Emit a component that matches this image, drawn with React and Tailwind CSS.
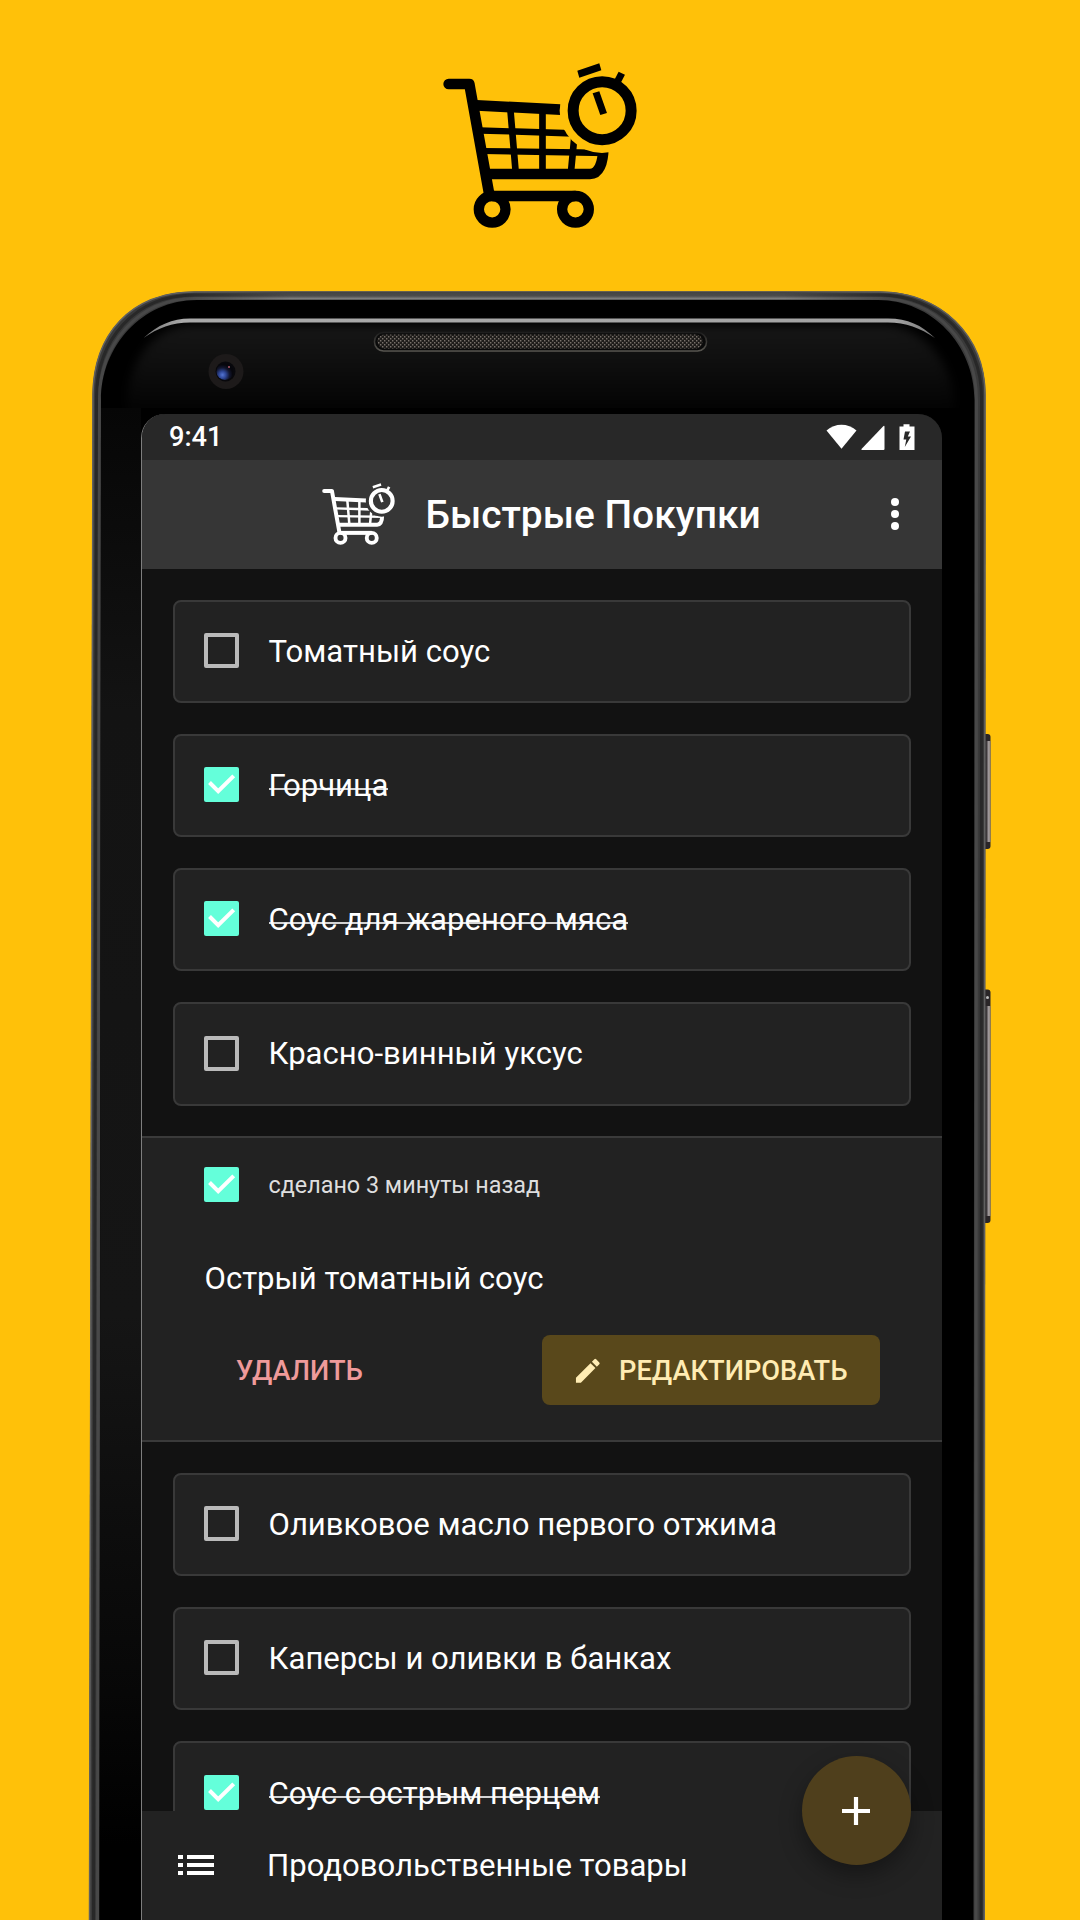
import React from "react";

const before = [
  { text: "Томатный соус", done: false },
  { text: "Горчица", done: true },
  { text: "Соус для жареного мяса", done: true },
  { text: "Красно-винный уксус", done: false },
];

const after = [
  { text: "Оливковое масло первого отжима", done: false },
  { text: "Каперсы и оливки в банках", done: false },
  { text: "Соус с острым перцем", done: true },
];

/* Shopping cart with a stopwatch at its corner */
function CartLogo({ className, id }) {
  return (
    <svg className={className} viewBox="39 38 583 496" fill="none" stroke="currentColor">
      <mask id={id} maskUnits="userSpaceOnUse" x="0" y="0" width="660" height="570">
        <rect width="660" height="570" fill="#fff" stroke="none" />
        <circle cx="516" cy="181" r="127" fill="#000" stroke="none" />
      </mask>
      <path d="M56 101H118L121 118L177 428" strokeWidth="32" strokeLinecap="round" strokeLinejoin="round" />
      <g mask={`url(#${id})`}>
        <path d="M140 149L392 162V194L140 181Z" fill="currentColor" stroke="none" />
        <path d="M150 231L402 238L430 259L150 250Z" fill="currentColor" stroke="none" />
        <path d="M160 293L450 297L530 300V318L160 311Z" fill="currentColor" stroke="none" />
        <path d="M241 175L257 365M337.500 180V365M434 250L423 365" strokeWidth="20" />
        <path d="M172 371H480C506 371 520 340 520 290" strokeWidth="32" />
      </g>
      <path d="M186 437H437" strokeWidth="32" />
      <circle cx="186.500" cy="477" r="40" strokeWidth="31" />
      <circle cx="436.500" cy="477" r="40" strokeWidth="31" />
      <circle cx="516.500" cy="181" r="87" strokeWidth="33" />
      <path d="M442 61L508 39L514 60L448 82Z" fill="currentColor" stroke="none" />
      <path d="M566 64L585 73L571 100L552 91Z" fill="currentColor" stroke="none" />
      <path d="M488 129L508 123L531 188L511 194Z" fill="currentColor" stroke="none" />
    </svg>
  );
}

/* Body of the handset: frame, glass, earpiece, camera and side keys */
function PhoneArt() {
  return (
    <svg className="absolute inset-0 h-full w-full" viewBox="0 291 1080 1629" fill="none">
      <defs>
        <linearGradient id="top" gradientUnits="userSpaceOnUse" x1="0" x2="0" y1="291" y2="301">
          <stop offset="0" stopColor="#6a6658" />
          <stop offset="0.15" stopColor="#444" />
          <stop offset="0.5" stopColor="#4c4c4c" />
          <stop offset="0.75" stopColor="#7c7c7c" />
          <stop offset="1" stopColor="#333" />
        </linearGradient>
        <linearGradient id="fadeEnds" gradientUnits="userSpaceOnUse" x1="185" x2="890" y1="0" y2="0">
          <stop offset="0" stopColor="#000" />
          <stop offset="0.15" stopColor="#fff" />
          <stop offset="0.85" stopColor="#fff" />
          <stop offset="1" stopColor="#000" />
        </linearGradient>
        <mask id="topMask" maskUnits="userSpaceOnUse" x="180" y="285" width="715" height="20">
          <rect x="180" y="285" width="715" height="20" fill="url(#fadeEnds)" />
        </mask>
        <linearGradient id="panel" gradientUnits="userSpaceOnUse" x1="0" x2="0" y1="320" y2="410">
          <stop offset="0" stopColor="#171717" />
          <stop offset="0.5" stopColor="#0e0e0e" />
          <stop offset="1" stopColor="#030303" />
        </linearGradient>
        <linearGradient id="leftGlass" gradientUnits="userSpaceOnUse" x1="0" x2="0" y1="408" y2="1920">
          <stop offset="0" stopColor="#060606" />
          <stop offset="0.2" stopColor="#131313" />
          <stop offset="0.6" stopColor="#151515" />
          <stop offset="0.85" stopColor="#070707" />
          <stop offset="0.95" stopColor="#000" />
        </linearGradient>
        <linearGradient id="shine" gradientUnits="userSpaceOnUse" x1="143" x2="935" y1="0" y2="0">
          <stop offset="0" stopColor="#777" />
          <stop offset="0.05" stopColor="#aaa" />
          <stop offset="0.95" stopColor="#a4a4a4" />
          <stop offset="1" stopColor="#777" />
        </linearGradient>
        <linearGradient id="key" gradientUnits="userSpaceOnUse" x1="984" x2="991" y1="0" y2="0">
          <stop offset="0" stopColor="#222" />
          <stop offset="0.35" stopColor="#3a3638" />
          <stop offset="0.65" stopColor="#a09a9c" />
          <stop offset="1" stopColor="#8b8072" />
        </linearGradient>
        <linearGradient id="slot" gradientUnits="userSpaceOnUse" x1="0" x2="0" y1="332" y2="352">
          <stop offset="0" stopColor="#1d1d1d" />
          <stop offset="1" stopColor="#5a5852" />
        </linearGradient>
        <radialGradient id="lens" cx="0.35" cy="0.7" r="0.6">
          <stop offset="0" stopColor="#5475d2" />
          <stop offset="0.35" stopColor="#2d4594" />
          <stop offset="0.7" stopColor="#12162f" />
          <stop offset="1" stopColor="#06060c" />
        </radialGradient>
        <pattern id="mesh" width="4" height="4" patternUnits="userSpaceOnUse">
          <rect width="4" height="4" fill="#1e1c1a" />
          <rect width="1.400" height="1.500" fill="#77706a" />
          <rect x="2" y="2" width="1.400" height="1.500" fill="#77706a" />
        </pattern>
        <filter id="soft" x="-20%" y="-20%" width="140%" height="140%" colorInterpolationFilters="sRGB">
          <feGaussianBlur stdDeviation="5" />
        </filter>
        <clipPath id="upper">
          <rect x="80" y="285" width="920" height="123" />
        </clipPath>
      </defs>

      {/* side keys */}
      <rect x="980" y="734" width="10.500" height="115" rx="3" fill="#2a2628" />
      <rect x="984" y="741" width="6.500" height="101" fill="url(#key)" />
      <rect x="980" y="989.500" width="10.500" height="233.500" rx="3" fill="#2a2628" />
      <rect x="984" y="1006" width="6.500" height="210" fill="url(#key)" />
      <circle cx="987.500" cy="997.500" r="1.500" fill="#bbb" />

      {/* metal frame */}
      <path d="M89 1920L92.500 395C93 335 130 291.500 195 291.500H880C940 291.500 985.500 335 985.500 395L984.700 1920Z" fill="#3a3a3a" />
      <path d="M89.500 1920L93 395C93.500 335 130 292 195 292H880C940 292 985 335 985 395L984.200 1920" stroke="#606060" strokeWidth="1.500" />
      <path d="M93.500 1920L96.500 397C97 340 134 295 195 295H880C938 295 981.500 339 981.500 397L981 1920" stroke="#282828" strokeWidth="3" />
      <path d="M97.500 1920L99.500 400C99.500 344 138 298.500 195 298.500H880C935 298.500 976.500 342 976.500 400L976 1920" stroke="#484848" strokeWidth="3" />
      <path d="M180 291.500H895V301H180Z" fill="url(#top)" mask="url(#topMask)" />

      {/* front glass */}
      <path d="M99.500 1920L101 400C101 346 142 300 197 300H878C932 300 974.500 345 974.500 400L973.500 1920Z" fill="#000" />
      <g clipPath="url(#upper)">
        <path d="M127 440V400C129 362 152 326 192 325H884C923 326 952 362 954 400V440Z" fill="url(#panel)" filter="url(#soft)" />
      </g>
      <path d="M101 408H141V1920H99.500Z" fill="url(#leftGlass)" />
      <path d="M143.500 338C158 325 172 318.500 190 318.500H888C908 318.500 921 325 935 338C920 328 906 322.500 888 322.500H190C172 322.500 158 328 143.500 338Z" fill="url(#shine)" />

      {/* earpiece */}
      <rect x="374.500" y="332.500" width="332" height="18.500" rx="9" fill="#0a0a0a" stroke="url(#slot)" strokeWidth="1.500" />
      <rect x="377.500" y="334.500" width="325" height="14" rx="7" fill="url(#mesh)" />

      {/* camera */}
      <circle cx="226" cy="371.500" r="17.500" fill="#1d1a1a" />
      <circle cx="225.500" cy="371.500" r="10" fill="#08080c" />
      <circle cx="225" cy="371.500" r="8.500" fill="url(#lens)" />
      <circle cx="229" cy="367" r="1" fill="#b05a6a" />
    </svg>
  );
}

function Checkbox({ done }) {
  if (!done) {
    return <span className="size-[35px] shrink-0 rounded-[2px] border-4 border-[#bababa]" />;
  }
  return (
    <span className="flex size-[35px] shrink-0 rounded-[2px] bg-[#64ffda]">
      <svg className="size-full" viewBox="0 0 35 35" fill="none" stroke="#fff" strokeWidth="4">
        <path d="M5.500 15.500L14.200 24.200L29.700 8.800" />
      </svg>
    </span>
  );
}

function Item({ text, done }) {
  return (
    <li className="flex h-[103.300px] items-center rounded-[8px] border-2 border-[#393939] bg-[#222222] pl-[29px]">
      <span className="mb-[2px] flex">
        <Checkbox done={done} />
      </span>
      {done ? (
        <s className="relative ml-[29.500px] text-[31.100px] leading-none no-underline after:absolute after:inset-x-0 after:top-[18px] after:h-[2px] after:bg-white/80">
          {text}
        </s>
      ) : (
        <span className="ml-[29.500px] text-[31.100px] leading-none">{text}</span>
      )}
    </li>
  );
}

function StatusBar() {
  return (
    <div className="flex h-[45.500px] items-center bg-[#282828] pr-[27.500px] pl-[27px] text-[27.200px] font-medium">
      <span className="pt-[2px] leading-none">9:41</span>
      <svg className="ml-auto h-[26px] w-[89px]" viewBox="0 0 89 26" fill="#fff">
        <path d="M0.500 6.500C9 -1.200 22 -1.200 30.500 6.500L15.500 24.800Z" />
        <path d="M35.500 26V25L57 2.500Q58.500 1 58.500 3V25Q58.500 26 57.500 26Z" />
        <path fillRule="evenodd" d="M73.500 2.500H77.500V0.300H83.500V2.500H88.500V26H73.500ZM79 7.500L77.500 15.500H80.300L78.800 23L85 12.500H81.800L84 7.500Z" />
      </svg>
    </div>
  );
}

function AppBar() {
  return (
    <header className="flex h-[109px] items-center bg-[#363636] pl-[180px]">
      <CartLogo id="halo-small" className="h-[62px] w-[73px]" />
      <h1 className="ml-[30.500px] pt-[2px] text-[38.900px] leading-none font-medium">Быстрые Покупки</h1>
      <div className="mr-[43px] ml-auto flex flex-col gap-[4px]">
        <span className="size-[8px] rounded-full bg-white" />
        <span className="size-[8px] rounded-full bg-white" />
        <span className="size-[8px] rounded-full bg-white" />
      </div>
    </header>
  );
}

function ExpandedItem() {
  return (
    <section className="mt-[30.700px] h-[305.500px] border-y-2 border-[#3a3a3a] bg-[#222222] pt-[29px]">
      <div className="flex items-center pl-[62px]">
        <Checkbox done />
        <span className="ml-[29.500px] pt-[2px] text-[23.350px] leading-none text-[#dedede]">сделано 3 минуты назад</span>
      </div>
      <p className="mt-[59px] pl-[62.500px] text-[31.100px] leading-[36px]">Острый томатный соус</p>
      <div className="mt-[38px] flex items-center justify-between pr-[62px] pl-[94px]">
        <span className="pt-[2px] text-[27.200px] leading-none font-medium text-[#ef9a9a]">УДАЛИТЬ</span>
        <button className="flex h-[70px] w-[338.500px] items-center rounded-[8px] bg-[#59481b] pl-[30px] text-[27.240px] font-medium text-[#ffecb3]">
          <svg className="size-[31.600px]" viewBox="0 0 24 24" fill="currentColor">
            <path d="M3 17.250V21h3.750L17.810 9.940l-3.750-3.750L3 17.250zM20.710 7.040c.390-.390.390-1.020 0-1.410l-2.340-2.340a.996.996 0 0 0-1.410 0l-1.830 1.830 3.750 3.750 1.830-1.830z" />
          </svg>
          <span className="ml-[16px] pt-[2px] leading-none">РЕДАКТИРОВАТЬ</span>
        </button>
      </div>
    </section>
  );
}

function BottomBar() {
  return (
    <footer className="relative flex h-[108.500px] items-center bg-[#222222] pl-[36px]">
      <svg className="h-[20px] w-[36px]" viewBox="0 0 36 20" fill="#fff">
        <path d="M0 0H5V4H0ZM9 0H36V4H9ZM0 8H5V12H0ZM9 8H36V12H9ZM0 16H5V20H0ZM9 16H36V20H9Z" />
      </svg>
      <span className="ml-[53px] text-[31.100px] leading-none">Продовольственные товары</span>
      <button className="absolute -top-[55px] right-[31px] flex size-[109px] items-center justify-center rounded-full bg-[#4f3f1c] shadow-[0_10px_22px_rgba(0,0,0,0.35)]">
        <svg className="mr-px size-[28px]" viewBox="0 0 28 28" stroke="#fff" strokeWidth="4.200">
          <path d="M14 0V28M0 14H28" />
        </svg>
      </button>
    </footer>
  );
}

export default function App() {
  return (
    <div className="flex h-[1920px] w-[1080px] flex-col overflow-hidden bg-[#ffc109] font-[Roboto,sans-serif]">
      <div className="flex h-[291px] shrink-0 justify-center pt-[62.700px] text-black">
        <CartLogo id="halo-large" className="h-[165.300px] w-[194.300px]" />
      </div>
      <div className="relative h-[1629px] shrink-0 pt-[123px] pl-[141px]">
        <PhoneArt />
        <main className="relative flex h-[1506px] w-[801px] flex-col overflow-hidden rounded-t-[24px] border-l border-[#7e7e7e] bg-[#121212] text-white">
          <StatusBar />
          <AppBar />
          <div className="h-[1242.500px] shrink-0 overflow-hidden pt-[31px]">
            <ul className="flex flex-col gap-[31px] px-[31px]">
              {before.map((item) => (
                <Item key={item.text} {...item} />
              ))}
            </ul>
            <ExpandedItem />
            <ul className="mt-[31px] flex flex-col gap-[31px] px-[31px]">
              {after.map((item) => (
                <Item key={item.text} {...item} />
              ))}
            </ul>
          </div>
          <BottomBar />
        </main>
      </div>
    </div>
  );
}
